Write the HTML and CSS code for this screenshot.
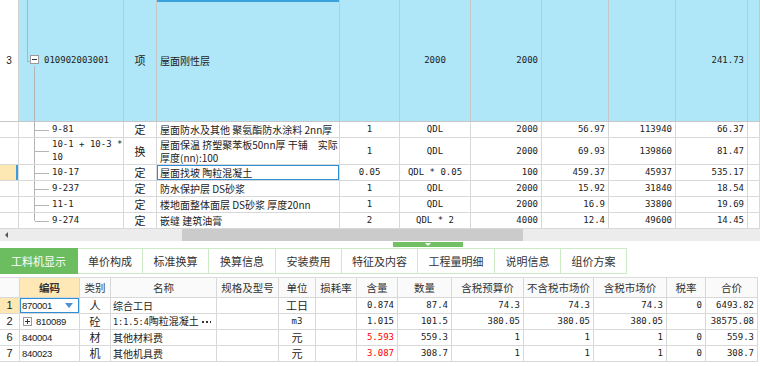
FILE: index.html
```html
<!DOCTYPE html>
<html lang="zh-CN">
<head>
  <meta charset="UTF-8"/>
  <title>分部分项工程</title>
  <link rel="stylesheet" href="styles.css">
</head>
<body>

  <!-- 清单 / 定额 -->
  <table class="grid top">
    <colgroup>
      <col class="w19"><col class="w105"><col class="w33"><col class="w183"><col class="w60">
      <col class="w71"><col class="w71"><col class="w67"><col class="w67"><col class="w72"><col class="w12">
    </colgroup>
    <tr class="bill">
      <td class="rn">3</td>
      <td class="root n"><span class="minus"></span>010902003001</td>
      <td class="c">项</td>
      <td class="head">屋面刚性层</td>
      <td></td>
      <td class="c n">2000</td>
      <td class="r n">2000</td>
      <td></td>
      <td></td>
      <td class="r n">241.73</td>
      <td></td>
    </tr>
    <tr class="h16">
      <td></td>
      <td class="tree n">9-81</td>
      <td class="c">定</td>
      <td>屋面防水及其他 聚氨酯防水涂料 2nn厚</td>
      <td class="c n">1</td>
      <td class="c n">QDL</td>
      <td class="r n">2000</td>
      <td class="r n">56.97</td>
      <td class="r n">113940</td>
      <td class="r n">66.37</td>
      <td></td>
    </tr>
    <tr class="h27">
      <td></td>
      <td class="tree n two">10-1 + 10-3 *<br>10</td>
      <td class="c">换</td>
      <td class="two">屋面保温 挤塑聚苯板50nn厚 干铺　实际<br>厚度(nn):100</td>
      <td class="c n">1</td>
      <td class="c n">QDL</td>
      <td class="r n">2000</td>
      <td class="r n">69.93</td>
      <td class="r n">139860</td>
      <td class="r n">81.47</td>
      <td></td>
    </tr>
    <tr class="h16">
      <td class="mark"></td>
      <td class="tree n">10-17</td>
      <td class="c">定</td>
      <td class="sel">屋面找坡 陶粒混凝土</td>
      <td class="c n">0.05</td>
      <td class="c n">QDL * 0.05</td>
      <td class="r n">100</td>
      <td class="r n">459.37</td>
      <td class="r n">45937</td>
      <td class="r n">535.17</td>
      <td></td>
    </tr>
    <tr class="h16">
      <td></td>
      <td class="tree n">9-237</td>
      <td class="c">定</td>
      <td>防水保护层 DS砂浆</td>
      <td class="c n">1</td>
      <td class="c n">QDL</td>
      <td class="r n">2000</td>
      <td class="r n">15.92</td>
      <td class="r n">31840</td>
      <td class="r n">18.54</td>
      <td></td>
    </tr>
    <tr class="h16">
      <td></td>
      <td class="tree n">11-1</td>
      <td class="c">定</td>
      <td>楼地面整体面层 DS砂浆 厚度20nn</td>
      <td class="c n">1</td>
      <td class="c n">QDL</td>
      <td class="r n">2000</td>
      <td class="r n">16.9</td>
      <td class="r n">33800</td>
      <td class="r n">19.69</td>
      <td></td>
    </tr>
    <tr class="h16">
      <td></td>
      <td class="tree last n">9-274</td>
      <td class="c">定</td>
      <td>嵌缝 建筑油膏</td>
      <td class="c n">2</td>
      <td class="c n">QDL * 2</td>
      <td class="r n">4000</td>
      <td class="r n">12.4</td>
      <td class="r n">49600</td>
      <td class="r n">14.45</td>
      <td></td>
    </tr>
  </table>

  <div class="hscroll">
    <span class="arrow"></span>
    <span class="thumb"></span>
  </div>

  <div class="splitter"><span class="grip"></span></div>

  <!-- 属性页签 -->
  <div class="tabs">
    <div class="tab active t78">工料机显示</div>
    <div class="tab t65">单价构成</div>
    <div class="tab t66">标准换算</div>
    <div class="tab t67">换算信息</div>
    <div class="tab t66">安装费用</div>
    <div class="tab t76">特征及内容</div>
    <div class="tab t77">工程量明细</div>
    <div class="tab t66">说明信息</div>
    <div class="tab t66">组价方案</div>
  </div>

  <!-- 工料机 -->
  <table class="grid bottom">
    <colgroup>
      <col class="w20"><col class="w60"><col class="w31"><col class="w106"><col class="w62">
      <col class="w37"><col class="w41"><col class="w41"><col class="w54"><col class="w72">
      <col class="w70"><col class="w73"><col class="w39"><col class="w52">
    </colgroup>
    <tr class="hd">
      <th></th>
      <th class="key">编码</th>
      <th>类别</th>
      <th>名称</th>
      <th>规格及型号</th>
      <th>单位</th>
      <th>损耗率</th>
      <th>含量</th>
      <th>数量</th>
      <th>含税预算价</th>
      <th>不含税市场价</th>
      <th>含税市场价</th>
      <th>税率</th>
      <th>合价</th>
    </tr>
    <tr class="h16">
      <td class="rn c on">1</td>
      <td class="sel code"><div class="split">870001<span class="drop"></span></div></td>
      <td class="c t">人</td>
      <td>综合工日</td>
      <td></td>
      <td class="c">工日</td>
      <td></td>
      <td class="r n">0.874</td>
      <td class="r n">87.4</td>
      <td class="r n">74.3</td>
      <td class="r n">74.3</td>
      <td class="r n">74.3</td>
      <td class="r n">0</td>
      <td class="r n">6493.82</td>
    </tr>
    <tr class="h16">
      <td class="rn c">2</td>
      <td class="code"><span class="plus"></span>810089</td>
      <td class="c t">砼</td>
      <td><div class="split"><span><span class="ratio">1:1.5:4</span>陶粒混凝土</span><span class="more"></span></div></td>
      <td></td>
      <td class="c n">m3</td>
      <td></td>
      <td class="r n">1.015</td>
      <td class="r n">101.5</td>
      <td class="r n">380.05</td>
      <td class="r n">380.05</td>
      <td class="r n">380.05</td>
      <td></td>
      <td class="r n">38575.08</td>
    </tr>
    <tr class="h16">
      <td class="rn c">6</td>
      <td class="code">840004</td>
      <td class="c t">材</td>
      <td>其他材料费</td>
      <td></td>
      <td class="c">元</td>
      <td></td>
      <td class="r n red">5.593</td>
      <td class="r n">559.3</td>
      <td class="r n">1</td>
      <td class="r n">1</td>
      <td class="r n">1</td>
      <td class="r n">0</td>
      <td class="r n">559.3</td>
    </tr>
    <tr class="h16">
      <td class="rn c">7</td>
      <td class="code">840023</td>
      <td class="c t">机</td>
      <td>其他机具费</td>
      <td></td>
      <td class="c">元</td>
      <td></td>
      <td class="r n red">3.087</td>
      <td class="r n">308.7</td>
      <td class="r n">1</td>
      <td class="r n">1</td>
      <td class="r n">1</td>
      <td class="r n">0</td>
      <td class="r n">308.7</td>
    </tr>
  </table>

</body>
</html>
```

FILE: styles.css
```css
* { box-sizing: border-box; }
body {
  margin: 0;
  width: 760px;
  height: 366px;
  overflow: hidden;
  background: #fff;
  color: #222;
  font-family: "Noto Sans CJK SC", sans-serif;
  font-size: 10px;
}

/* grids */
.grid {
  border-collapse: separate;
  border-spacing: 0;
  table-layout: fixed;
}
.grid td, .grid th {
  padding: 0 2px;
  border-right: 1px solid #d8d8d8;
  border-bottom: 1px solid #d8d8d8;
  white-space: nowrap;
  overflow: hidden;
  line-height: 11px;
  font-weight: normal;
  vertical-align: middle;
}
.top { width: 760px; }
.bottom { width: 758px; }

.w12 { width: 12px; } .w19 { width: 19px; } .w20 { width: 20px; }
.w31 { width: 31px; } .w33 { width: 33px; } .w37 { width: 37px; }
.w39 { width: 39px; } .w41 { width: 41px; } .w52 { width: 52px; }
.w54 { width: 54px; } .w60 { width: 60px; } .w62 { width: 62px; }
.w67 { width: 67px; } .w70 { width: 70px; } .w71 { width: 71px; }
.w72 { width: 72px; } .w73 { width: 73px; } .w105 { width: 105px; }
.w106 { width: 106px; } .w183 { width: 183px; }

.h16 { height: 16px; }
.h27 { height: 27px; }
.c { text-align: center; }
.r { text-align: right; }
.grid td.r { padding-right: 3px; }
.grid td.two { line-height: 13px; }
.n {
  font-family: "DejaVu Sans Mono", "Noto Sans CJK SC", monospace;
  font-size: 9px;
}
.grid td.c:not(.n) { font-size: 11px; }
.rn {
  font-family: "Liberation Sans", sans-serif;
  font-size: 10px;
  text-align: center;
}
.sel { box-shadow: inset 0 0 0 1px #2f8fd6; }
.red { color: #f00; font-weight: bold; }

/* current bill row */
.bill { height: 122px; }
.bill td {
  background: #afe7f9;
  border-color: #c6c6c6;
}
.bill td.rn { background: #fff; border-right-color: #d0d0d0; }
.bill td.head { box-shadow: inset 0 2px 0 #3aa2da; }
.top td:nth-child(4) { padding-left: 3px; }

/* tree lines */
.grid td.root, .grid td.tree { position: relative; }
.grid td.root { padding-left: 11px; }
.root::before {
  content: "";
  position: absolute;
  left: 8px; top: 0;
  width: 3px; height: 50%;
  border-left: 1px solid #b4b4b4;
  border-bottom: 1px solid #b4b4b4;
}
.root::after {
  content: "";
  position: absolute;
  left: 15px; top: calc(50% + 5px); bottom: 0;
  border-left: 1px solid #b4b4b4;
}
.minus {
  display: inline-block;
  width: 9px;
  height: 9px;
  margin-right: 5px;
  vertical-align: -1px;
  border: 1px solid #9a9a9a;
  background: linear-gradient(#333, #333) center / 5px 1px no-repeat, #fff;
}
.grid td.tree { padding-left: 33px; }
.tree::before {
  content: "";
  position: absolute;
  left: 15px; top: 0; bottom: 0;
  border-left: 1px solid #b4b4b4;
}
.tree.last::before { bottom: 50%; }
.tree::after {
  content: "";
  position: absolute;
  left: 16px; top: 50%;
  width: 14px;
  border-top: 1px solid #b4b4b4;
}
.mark {
  background: #fde8b4;
  box-shadow: inset -2px 0 0 #3d9ddb;
}

/* scroll + splitter */
.hscroll {
  display: flex;
  height: 12px;
  background: #ececec;
}
.arrow {
  width: 12px;
  display: flex;
  align-items: center;
  justify-content: center;
}
.arrow::before {
  content: "";
  border-top: 3px solid transparent;
  border-bottom: 3px solid transparent;
  border-right: 3px solid #555;
}
.thumb {
  margin-left: 170px;
  width: 341px;
  background: #cbcbcb;
}
.splitter {
  height: 7px;
  padding-top: 1px;
}
.grip {
  display: flex;
  justify-content: center;
  width: 70px;
  height: 5px;
  margin-left: 393px;
  background: #72c064;
}
.grip::before {
  content: "";
  margin-top: 1px;
  border-left: 3px solid transparent;
  border-right: 3px solid transparent;
  border-top: 3px solid #fff;
}

/* tabs */
.tabs {
  display: flex;
  height: 26px;
  margin-bottom: 3px;
}
.tab {
  display: flex;
  align-items: center;
  justify-content: center;
  border: 1px solid #cde9c6;
  border-left: none;
  font-size: 11px;
  color: #333;
}
.tab.active {
  background: #6cbd5f;
  border-color: #6cbd5f;
  color: #fff;
}
.t65 { width: 65px; } .t66 { width: 66px; } .t67 { width: 67px; }
.t76 { width: 76px; } .t77 { width: 77px; } .t78 { width: 78px; }

/* bottom grid */
.bottom { border-top: 1px solid #dcdcdc; }
.hd { height: 20px; }
.hd th {
  background: #fafafa;
  color: #333;
  font-size: 10.5px;
  text-align: center;
}
.hd th.key { background: #fde8b6; font-weight: bold; }
.bottom td:nth-child(4) { padding-left: 2px; }
.on { background: #fde8b4; font-weight: bold; }
.code {
  font-family: "Liberation Sans", sans-serif;
  font-size: 9.5px;
  letter-spacing: -0.3px;
}
.t { font-size: 11px; }
.split {
  display: flex;
  align-items: center;
  justify-content: space-between;
}
.drop {
  margin-right: 4px;
  border-left: 4px solid transparent;
  border-right: 4px solid transparent;
  border-top: 5px solid #4a8fd6;
}
.ratio {
  font-family: "DejaVu Sans Mono", monospace;
  font-size: 8.5px;
}
/* "..." button drawn as three dots */
.more {
  width: 10px;
  height: 2px;
  margin-right: 3px;
  background: radial-gradient(circle, #333 0.8px, transparent 1px) 0 0 / 4px 2px repeat-x;
}
.plus {
  display: inline-block;
  width: 9px;
  height: 9px;
  margin: 0 4px 0 1px;
  vertical-align: -1px;
  border: 1px solid #9a9a9a;
  background:
    linear-gradient(#333, #333) center / 5px 1px no-repeat,
    linear-gradient(#333, #333) center / 1px 5px no-repeat,
    #fff;
}
```
